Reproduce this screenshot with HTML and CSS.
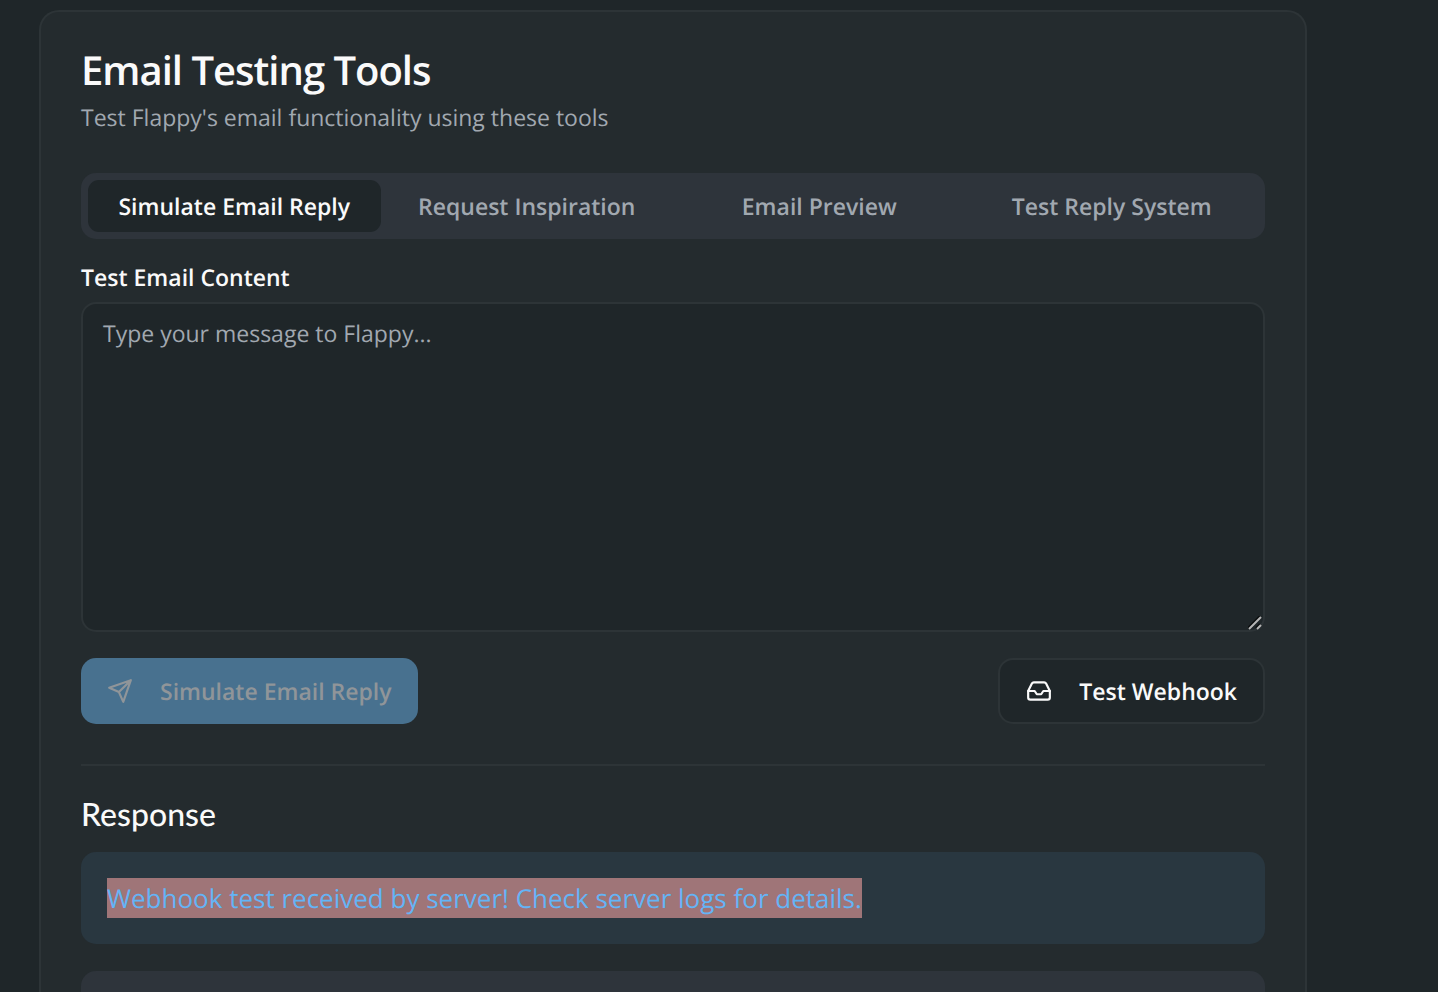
FILE: index.html
```html
<!DOCTYPE html>
<html lang="en">
<head>
<meta charset="utf-8">
<title>Email Testing Tools</title>
<link rel="stylesheet" href="styles.css">
</head>
<body>
<main class="card">
  <header class="card-header">
    <h1 class="title">Email Testing Tools</h1>
    <p class="description">Test Flappy's email functionality using these tools</p>
  </header>
  <div class="tabs" role="tablist">
    <button class="tab tab-active" type="button" role="tab" aria-selected="true">Simulate Email Reply</button>
    <button class="tab" type="button" role="tab" aria-selected="false">Request Inspiration</button>
    <button class="tab" type="button" role="tab" aria-selected="false">Email Preview</button>
    <button class="tab" type="button" role="tab" aria-selected="false">Test Reply System</button>
  </div>
  <form class="form">
    <label class="label" for="content">Test Email Content</label>
    <div class="field">
      <textarea class="textarea" id="content" placeholder="Type your message to Flappy..."></textarea>
      <svg class="grip" viewBox="0 0 14 14" aria-hidden="true">
        <path class="grip-shade" d="M0 12 12 0M8 12l4-4"/>
        <path class="grip-line" d="M1 13 13 1M9 13l4-4"/>
      </svg>
    </div>
    <div class="actions">
      <button class="button button-primary" type="submit" disabled>
        <svg class="icon" viewBox="0 0 24 24" aria-hidden="true"><path d="M22 2 11 13M22 2l-7 20-4-9-9-4 20-7z"/></svg>
        Simulate Email Reply
      </button>
      <button class="button button-outline" type="button">
        <svg class="icon" viewBox="0 0 24 24" aria-hidden="true"><path d="M22 12h-6l-2 3h-4l-2-3H2"/><path d="M5.45 5.11 2 12v6a2 2 0 0 0 2 2h16a2 2 0 0 0 2-2v-6l-3.45-6.89A2 2 0 0 0 16.76 4H7.24a2 2 0 0 0-1.79 1.11z"/></svg>
        Test Webhook
      </button>
    </div>
  </form>
  <section class="response">
    <h2 class="response-title">Response</h2>
    <div class="notice"><p class="notice-text"><mark class="selection">Webhook test received by server! Check server logs for details.</mark></p></div>
    <div class="details"></div>
  </section>
</main>
</body>
</html>
```

FILE: styles.css
```css
* { box-sizing: border-box; }
html { height: 100%; overflow: hidden; background: #1f2629; }
body {
  display: flex;
  flex-direction: column;
  margin: 0;
  padding: 10px 131px 0 39px;
  height: 100%;
  background: #1f2629;
  color: #fafafa;
  font-family: "Open Sans", "Noto Sans", sans-serif;
  font-size: 23px;
  text-rendering: geometricPrecision;
}
h1, h2, p { margin: 0; }
button, textarea { font: inherit; color: inherit; text-rendering: inherit; }
.card {
  display: flex;
  flex-direction: column;
  flex: 1;
  padding: 38px 40px 0;
  border: 2px solid #2d3437;
  border-bottom: 0;
  border-radius: 20px 20px 0 0;
  background: #242b2e;
}
.card-header { margin-bottom: 39px; }
.title { font-size: 40px; line-height: 40px; font-weight: 600; letter-spacing: -0.025em; }
.description { margin-top: 11px; line-height: 33px; color: #a1a8b0; }
.tabs {
  display: grid;
  grid-template-columns: repeat(4, 1fr);
  padding: 7px;
  border-radius: 15px;
  background: #2e343b;
}
.tab {
  padding: 9px 12px;
  border: 0;
  border-radius: 11px;
  background: transparent;
  color: #a1a8b0;
  line-height: 34px;
  font-weight: 600;
  white-space: nowrap;
}
.tab-active { background: #1f2629; color: #fafafa; }
.form {
  display: flex;
  flex-direction: column;
  margin-top: 26px;
  padding-bottom: 40px;
  border-bottom: 2px solid #2d3437;
}
.label { line-height: 24px; font-weight: 600; }
.field { position: relative; display: flex; margin-top: 13px; }
.textarea {
  flex: 1;
  height: 330px;
  padding: 13px 20px;
  border: 2px solid #2d3437;
  border-radius: 15px;
  background: #1f2629;
  line-height: 33px;
  resize: vertical;
}
.textarea::placeholder { color: #a1a8b0; opacity: 1; }
.textarea::-webkit-resizer { background: transparent; }
.grip {
  position: absolute;
  right: 3px;
  bottom: 2px;
  width: 14px;
  height: 14px;
  fill: none;
  stroke-width: 2;
  pointer-events: none;
}
.grip-shade { stroke: #0b0e0f; }
.grip-line { stroke: #b5b5b5; }
.actions { display: flex; justify-content: space-between; margin-top: 26px; }
.button {
  display: flex;
  align-items: center;
  gap: 27px;
  height: 66px;
  padding: 0 26px;
  border: 0;
  border-radius: 15px;
  font-weight: 600;
}
.button-primary { background: #48718f; color: #909599; }
.button-outline { border: 2px solid #2d3437; background: #1f2629; }
.icon {
  width: 26px;
  height: 26px;
  fill: none;
  stroke: currentColor;
  stroke-width: 2;
  stroke-linecap: round;
  stroke-linejoin: round;
}
.response { display: flex; flex: 1; flex-direction: column; margin-top: 28px; }
.response-title { font-family: Lato, sans-serif; font-size: 32px; line-height: 40px; font-weight: 500; }
.notice { margin-top: 18px; padding: 26px; border-radius: 15px; background: #293740; }
.notice-text { font-size: 26px; line-height: 40px; }
.selection { display: inline-block; background: #9f7578; color: #64b4f6; }
.details { flex: 1; margin-top: 27px; border-radius: 15px 15px 0 0; background: #2e343b; }
```
